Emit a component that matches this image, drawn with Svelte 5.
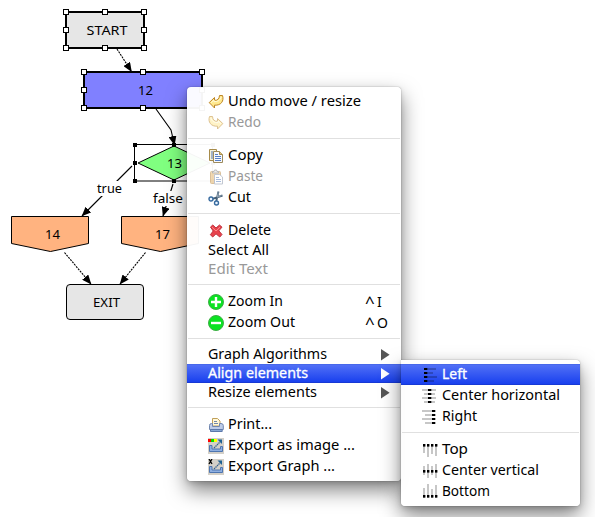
<script>
  const mainMenu = [
    [{ t: 'Undo move / resize', i: 'undo', w: 133 }, { t: 'Redo', i: 'redo', off: true, w: 33 }],
    [{ t: 'Copy', i: 'copy', w: 35 }, { t: 'Paste', i: 'paste', off: true, w: 35 }, { t: 'Cut', i: 'cut', w: 23 }],
    [{ t: 'Delete', i: 'delete', w: 43 }, { t: 'Select All', w: 61 }, { t: 'Edit Text', off: true, w: 60 }],
    [{ t: 'Zoom In', i: 'plus', key: 'I', w: 55 }, { t: 'Zoom Out', i: 'minus', key: 'O', w: 67 }],
    [{ t: 'Graph Algorithms', sub: true, w: 119 }, { t: 'Align elements', sub: true, on: true, w: 100 }, { t: 'Resize elements', sub: true, w: 109 }],
    [{ t: 'Print...', i: 'print', w: 44 }, { t: 'Export as image ...', i: 'image', w: 127 }, { t: 'Export Graph ...', i: 'graph', w: 107 }]
  ];
  const alignMenu = [
    [{ t: 'Left', i: 'left', on: true, w: 25 }, { t: 'Center horizontal', i: 'hcenter', w: 118 }, { t: 'Right', i: 'right', w: 35 }],
    [{ t: 'Top', i: 'top', w: 26 }, { t: 'Center vertical', i: 'vcenter', w: 97 }, { t: 'Bottom', i: 'bottom', w: 48 }]
  ];
  const handles = [
    [66, 12], [105, 12], [144, 12], [66, 30], [144, 30], [66, 48], [105, 48], [144, 48],
    [84, 72], [143, 72], [202, 72], [84, 90], [202, 90], [84, 108], [143, 108], [202, 108]
  ];
  const anchors = [[135, 145], [174, 145], [213, 145], [135, 163], [213, 163], [135, 181], [174, 181], [213, 181]];
  // position of the dark dot along each bar
  const dots = { left: 2, hcenter: 6, right: 10, top: 2, vcenter: 7, bottom: 11 };
  const spans = {
    left: [[2, 14], [2, 11], [2, 15], [2, 12]],
    hcenter: [[0, 14], [2, 13], [0, 14], [2, 13]],
    right: [[0, 13], [3, 13], [0, 13], [3, 13]],
    top: [[2, 11], [2, 15], [2, 12], [2, 14]],
    vcenter: [[3, 12], [1, 15], [3, 12], [1, 15]],
    bottom: [[4, 14], [0, 14], [5, 14], [1, 14]]
  };
</script>

{#snippet icon(name)}
  <svg class="icon" width="16" height="16" viewBox="0 0 16 16">
    {#if name === 'undo' || name === 'redo'}
      <g transform={name === 'redo' ? 'translate(16 0) scale(-1 1)' : null} opacity={name === 'redo' ? 0.5 : 1}>
        <path d="M1.2 8.6 6.5 3.5V6.3C9.5 6.6 11.3 5 11.5 1.5H14.5C16.3 7 13 11.6 6.5 11.2V14Z" fill="#ffe98e" stroke="#bd8627" />
        <path d="M3 8.7 6 6V7.7C10 7.8 12.5 6 13.2 3" fill="none" stroke="#fffbd9" />
      </g>
    {:else if name === 'copy'}
      <path d="M1.5 1.5H8.5V12.5H1.5Z" fill="#f5f2dc" stroke="#a78b4a" />
      <path d="M3 4H5M3 6H5M3 8H5M3 10H5" stroke="#5274b2" />
      <path d="M5.5 3.5H11.5L14.5 6.5V14.5H5.5Z" fill="#f7f9ff" stroke="#9d8b5c" />
      <path d="M11.5 3.5V6.5H14.5" fill="#e3c57c" stroke="#a78b4a" />
      <path d="M7 6.5H10M7 8.5H13M7 10.5H13M7 12.5H13" stroke="#557fc5" />
    {:else if name === 'paste'}
      <g opacity=".5">
        <rect x="2.5" y="2.5" width="10" height="12" rx="1" fill="#e6b568" stroke="#b58339" />
        <path d="M4.5 4V2.5H6L6.5 1H8.5L9 2.5H10.5V4Z" fill="#ddd" stroke="#777" />
        <path d="M6.5 5.5H11.5L14.5 8V15H6.5Z" fill="#fff" stroke="#8791a5" />
        <path d="M8 8.5H11M8 10.5H13M8 12.5H13" stroke="#537cbc" />
      </g>
    {:else if name === 'cut'}
      <path d="M10.5 1.5 8.3 11M14.5 5.5 4.5 8.8" stroke="#456078" stroke-width="1.9" fill="none" />
      <path d="M10.3 2.5 9.2 7M13.5 5.6 9 7.2" stroke="#c8d2dd" stroke-width=".6" />
      <circle cx="3" cy="9" r="2" fill="#eaf4ff" stroke="#386b9f" stroke-width="1.4" />
      <circle cx="8.5" cy="13" r="2" fill="#eaf4ff" stroke="#386b9f" stroke-width="1.4" />
    {:else if name === 'delete'}
      <path d="M2.5 4 4.8 2 8 5 11.5 2 14 4.2 10.8 7.8 14 11.5 11.8 14 8 10.8 4.7 14 2.4 11.7 5.2 8Z" fill="#e8434d" stroke="#c0303c" />
      <path d="M4 4.2 8 8M12 4.2 8 8" stroke="#ff8c8c" />
    {:else if name === 'plus' || name === 'minus'}
      <circle cx="8" cy="8" r="7.5" fill="#0be322" stroke="#3eae46" />
      <path d={name === 'plus' ? 'M3 8H13M8 3V13' : 'M3 8H13'} stroke="#fff" stroke-width="2.4" />
    {:else if name === 'print'}
      <path d="M4.5 9V1.5H9.5L12 4V9Z" fill="#fff8d9" stroke="#c0a05a" />
      <path d="M6 4.5H9M6 6.5H10" stroke="#7187a8" />
      <path d="M1.5 8.5Q1.5 6.5 3.5 6.5H4.5V9.5H11.5V6.5H13Q15.3 6.5 15.3 8.5V12.5H1.5Z" fill="#bdcce9" stroke="#7086af" />
      <path d="M2.5 12.5H14.2V14.5H2.5Z" fill="#87a7d4" stroke="#5d79aa" />
    {:else if name === 'image' || name === 'graph'}
      <rect width="16" height="16" fill="#d4d0c8" />
      <path d="M4 7.5H1.5V13.5H14.5V8.5H12.5V11H4Z" fill="#8fafe0" stroke="#4f76b0" />
      <path d="M6 10 12.5 3.5" stroke="#35618e" stroke-width="1.2" stroke-dasharray="1.5 .6" />
      <path d="M9.5 1.5H14V6Z" fill="#1d6293" />
      {#if name === 'image'}
        <path d="M0 1H3V4H0Z" fill="red" /><path d="M3 1H6V4H3Z" fill="#0d0" /><path d="M6 1H9V4H6Z" fill="#ff0" />
      {:else}
        <path d="M1 0 4 5M4 0 1 5" stroke="#000" stroke-width="1.3" />
      {/if}
    {:else if spans[name]}
      {#each spans[name] as s, n}
        {#if ['top', 'vcenter', 'bottom'].includes(name)}
          <rect x={1 + n * 4} y={s[0]} width="2" height={s[1] - s[0]} opacity=".22" />
          <rect x={1 + n * 4} y={dots[name]} width="2.4" height="2.6" />
        {:else}
          <rect x={s[0]} y={1 + n * 4} width={s[1] - s[0]} height="2" opacity=".22" />
          <rect x={dots[name]} y={1 + n * 4} width="3.3" height="2" />
        {/if}
      {/each}
    {/if}
  </svg>
{/snippet}

{#snippet menu(groups)}
  {#each groups as group, g}
    {#if g}<div class="sep"></div>{/if}
    {#each group as m}
      <div class="row" class:tall={m.i} class:off={m.off} class:on={m.on}>
        {#if m.i}{@render icon(m.i)}{/if}
        <svg class="label" height="19" width={m.w + 2}>
          <text x="0" y="14" textLength={m.w} lengthAdjust="spacingAndGlyphs">{m.t}</text>
        </svg>
        {#if m.key}<span class="key"><i>^</i><b>{m.key}</b></span>{/if}
        {#if m.sub}<svg class="more" width="9" height="12"><path d="M0 0V11.4L8.6 5.7Z" /></svg>{/if}
      </div>
    {/each}
  {/each}
{/snippet}

<main>
  <svg class="canvas" width="595" height="517">
    <defs>
      <marker id="tip" markerWidth="10" markerHeight="8" refX="9" refY="4" orient="auto" markerUnits="userSpaceOnUse">
        <path d="M0 0 9.5 4 0 8Z" />
      </marker>
    </defs>
    <g fill="none" stroke="#000" stroke-width="1.1">
      <path d="M117 49 131.5 71.5" stroke-dasharray="2 1" marker-end="url(#tip)" />
      <path d="M156 109 171 130 174.5 145" marker-end="url(#tip)" />
      <path d="M132 166 82 216" marker-end="url(#tip)" />
      <path d="M173 184 163 216" marker-end="url(#tip)" />
      <path d="M64.5 252.5 91 284" stroke-dasharray="2 1" marker-end="url(#tip)" />
      <path d="M145.5 252.5 120 284" stroke-dasharray="2 1" marker-end="url(#tip)" />
    </g>
    <path d="M96 181H123V196H96ZM152 191H184V206H152Z" fill="#fff" />
    <g stroke="#000">
      <rect x="66" y="12" width="78" height="36" fill="#e6e6e6" stroke-width="2" />
      <rect x="84" y="72" width="118" height="36" fill="#8080ff" stroke-width="2" />
      <rect x="134.5" y="144.5" width="78" height="36.5" fill="none" />
      <path d="M138 163 174 146 210 163 174 180Z" fill="#80ff80" />
      <path d="M11.5 216.5H88.5V243.5L50.5 251.5 11.5 243.5Z" fill="#ffb380" />
      <path d="M121.5 216.5H198.5V243.5L160.5 251.5 121.5 243.5Z" fill="#ffb380" />
      <rect x="66.5" y="284.5" width="77" height="35" rx="3.5" fill="#e6e6e6" />
      {#each handles as [x, y]}<rect x={x - 2.5} y={y - 2.5} width="5" height="5" fill="#fff" />{/each}
    </g>
    {#each anchors as [x, y]}<rect x={x - 2} y={y - 2} width="4" height="4" />{/each}
    <g class="names">
      <text x="86.5" y="35" textLength="41" lengthAdjust="spacingAndGlyphs">START</text>
      <text x="138" y="95" textLength="15" lengthAdjust="spacingAndGlyphs">12</text>
      <text x="167" y="168" textLength="15" lengthAdjust="spacingAndGlyphs">13</text>
      <text x="45" y="239" textLength="15" lengthAdjust="spacingAndGlyphs">14</text>
      <text x="155" y="239" textLength="15" lengthAdjust="spacingAndGlyphs">17</text>
      <text x="93" y="307" textLength="27" lengthAdjust="spacingAndGlyphs">EXIT</text>
      <text x="97" y="193" textLength="25" lengthAdjust="spacingAndGlyphs">true</text>
      <text x="153" y="203" textLength="30" lengthAdjust="spacingAndGlyphs">false</text>
    </g>
  </svg>
  <div class="menu primary">{@render menu(mainMenu)}</div>
  <div class="menu nested">{@render menu(alignMenu)}</div>
</main>

<style>
  :global(body) { background: #fff; }
  main { position: relative; width: 595px; height: 517px; overflow: hidden; font: 14px "Noto Sans", sans-serif; }
  .canvas { display: block; }
  .names { font-size: 13px; }
  .menu {
    position: absolute; box-sizing: border-box; padding: 4px 0; border-radius: 4px;
    background: rgba(255, 255, 255, .96);
    box-shadow: 0 0 1px rgba(0, 0, 0, .6), 0 9px 20px rgba(0, 0, 0, .5), 0 2px 5px rgba(0, 0, 0, .15);
  }
  .primary { left: 187px; top: 87px; width: 214px; height: 394px; }
  .nested { left: 401px; top: 360px; width: 179px; height: 146px; border-radius: 0 4px 4px 4px; }
  .row { display: flex; align-items: center; height: 19px; padding: 0 11px 0 21px; fill: #000; color: #000; }
  .tall { height: 21px; }
  .icon { flex: none; margin-right: 4px; }
  .label { flex: none; overflow: visible; }
  .off .label { fill: #999; }
  .on { background: linear-gradient(#5170f6, #1940ee); border-top: 1px solid #4868ea; border-bottom: 1px solid #1739d5; box-sizing: border-box; }
  .on .label, .on .more { fill: #fff; }
  .on .label { stroke: #fff; stroke-width: .3px; }
  .sep { height: 1px; margin: 5px 1px 6px; background: #e0e0e0; }
  .key { display: flex; margin-left: auto; width: 25px; }
  .key i, .key b { font: inherit; width: 12px; }
  .key i { font-size: 17px; line-height: 20px; height: 19px; }
  .more { margin-left: auto; fill: #555; }
</style>
